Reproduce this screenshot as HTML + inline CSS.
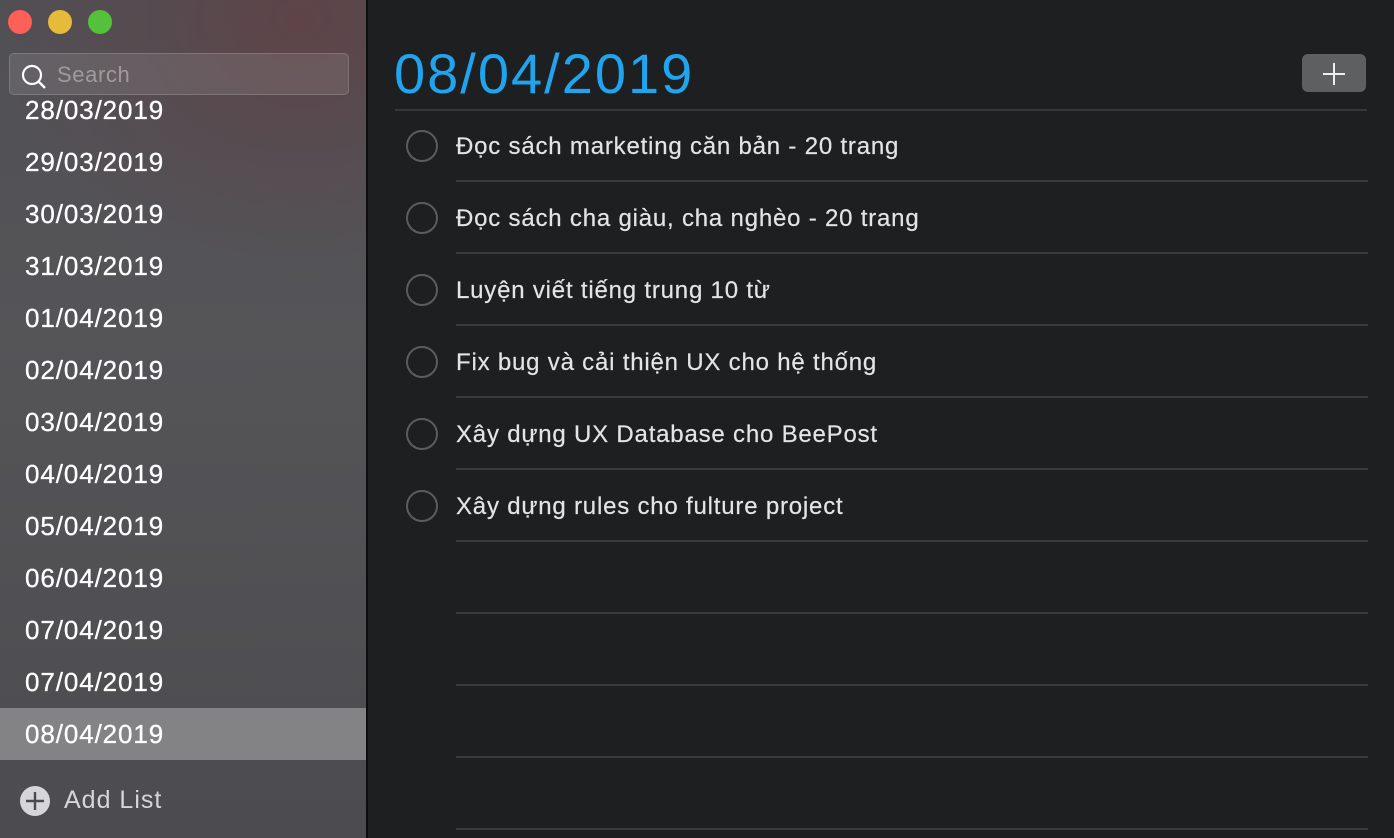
<!DOCTYPE html>
<html><head><meta charset="utf-8"><style>
*{margin:0;padding:0;box-sizing:border-box}
body{width:1394px;height:838px;overflow:hidden;background:#1e1f21;font-family:"Liberation Sans",sans-serif;position:relative}
#side{position:absolute;left:0;top:0;width:366px;height:838px;background:radial-gradient(ellipse 320px 260px at 300px 20px,#5e4448 0%,rgba(90,70,75,0.5) 50%,rgba(80,80,84,0) 100%),linear-gradient(180deg,#505055 0%,#555558 40%,#4c4c50 100%);overflow:hidden}
#sep{position:absolute;left:366px;top:0;width:2px;height:838px;background:#0e0e0f}
.dot{position:absolute;top:10px;width:24px;height:24px;border-radius:50%}
#search{position:absolute;left:9px;top:53px;width:340px;height:42px;border:1px solid rgba(255,255,255,0.15);border-radius:5px;background:rgba(255,255,255,0.1)}
#search span{position:absolute;left:47px;top:8px;font-size:22px;color:#a09a9c;letter-spacing:0.6px}
.d{position:absolute;left:0;width:366px;height:52px;line-height:53px;padding-left:25px;font-size:26px;color:#fff;letter-spacing:0.9px;-webkit-text-stroke:0.3px #fff}
#list{position:absolute;top:95px;left:0;width:366px;height:665px;overflow:hidden}
.sel{background:#838386}
#add{position:absolute;left:64px;top:786px;font-size:25px;color:#d6d6d8;letter-spacing:1px}
h1{position:absolute;left:394px;top:41px;font-weight:normal;font-size:56px;color:#21a4ee;letter-spacing:2px}
#hl{position:absolute;left:395px;top:109px;width:972px;height:2px;background:#37383a}
#btn{position:absolute;left:1302px;top:54px;width:64px;height:38px;border-radius:6px;background:#5e5f61}
.t{position:absolute;left:456px;font-size:24px;color:#e4e4e6;line-height:30px;letter-spacing:0.8px;-webkit-text-stroke:0.2px #e4e4e6}
.c{position:absolute;left:406px;width:32px;height:32px;border:2px solid #5b5c5e;border-radius:50%}
.l{position:absolute;left:456px;width:912px;height:2px;background:#3a3b3d}
</style></head><body>
<div id="side">
<div class="dot" style="left:8px;background:#fe5f57"></div>
<div class="dot" style="left:48px;background:#e6bb3a"></div>
<div class="dot" style="left:88px;background:#55c13b"></div>
<div id="list">
<div class="d" style="top:-11px">28/03/2019</div>
<div class="d" style="top:41px">29/03/2019</div>
<div class="d" style="top:93px">30/03/2019</div>
<div class="d" style="top:145px">31/03/2019</div>
<div class="d" style="top:197px">01/04/2019</div>
<div class="d" style="top:249px">02/04/2019</div>
<div class="d" style="top:301px">03/04/2019</div>
<div class="d" style="top:353px">04/04/2019</div>
<div class="d" style="top:405px">05/04/2019</div>
<div class="d" style="top:457px">06/04/2019</div>
<div class="d" style="top:509px">07/04/2019</div>
<div class="d" style="top:561px">07/04/2019</div>
<div class="d sel" style="top:613px">08/04/2019</div>
</div>
<div id="search"><svg style="position:absolute;left:10px;top:9px" width="28" height="28" viewBox="0 0 28 28"><circle cx="12" cy="12" r="9" fill="none" stroke="#fff" stroke-width="2.2"/><line x1="18.5" y1="18.5" x2="25" y2="25" stroke="#fff" stroke-width="2.4"/></svg><span>Search</span></div>
<svg style="position:absolute;left:19px;top:785px" width="32" height="32" viewBox="0 0 32 32"><circle cx="16" cy="16" r="15" fill="#d6d6d8"/><line x1="16" y1="7" x2="16" y2="25" stroke="#4b4b4f" stroke-width="2.4"/><line x1="7" y1="16" x2="25" y2="16" stroke="#4b4b4f" stroke-width="2.4"/></svg>
<div id="add">Add List</div>
</div>
<div id="sep"></div>
<h1>08/04/2019</h1>
<div id="hl"></div>
<div id="btn"><svg style="position:absolute;left:20px;top:8px" width="24" height="24" viewBox="0 0 24 24"><line x1="12" y1="1" x2="12" y2="23" stroke="#eee" stroke-width="2"/><line x1="1" y1="12" x2="23" y2="12" stroke="#eee" stroke-width="2"/></svg></div>
<div class="c" style="top:130px"></div><div class="t" style="top:132px">Đọc sách marketing căn bản - 20 trang</div><div class="l" style="top:180px"></div>
<div class="c" style="top:202px"></div><div class="t" style="top:204px">Đọc sách cha giàu, cha nghèo - 20 trang</div><div class="l" style="top:252px"></div>
<div class="c" style="top:274px"></div><div class="t" style="top:276px">Luyện viết tiếng trung 10 từ</div><div class="l" style="top:324px"></div>
<div class="c" style="top:346px"></div><div class="t" style="top:348px">Fix bug và cải thiện UX cho hệ thống</div><div class="l" style="top:396px"></div>
<div class="c" style="top:418px"></div><div class="t" style="top:420px">Xây dựng UX Database cho BeePost</div><div class="l" style="top:468px"></div>
<div class="c" style="top:490px"></div><div class="t" style="top:492px">Xây dựng rules cho fulture project</div><div class="l" style="top:540px"></div>
<div class="l" style="top:612px"></div>
<div class="l" style="top:684px"></div>
<div class="l" style="top:756px"></div>
<div class="l" style="top:828px"></div>
</body></html>
